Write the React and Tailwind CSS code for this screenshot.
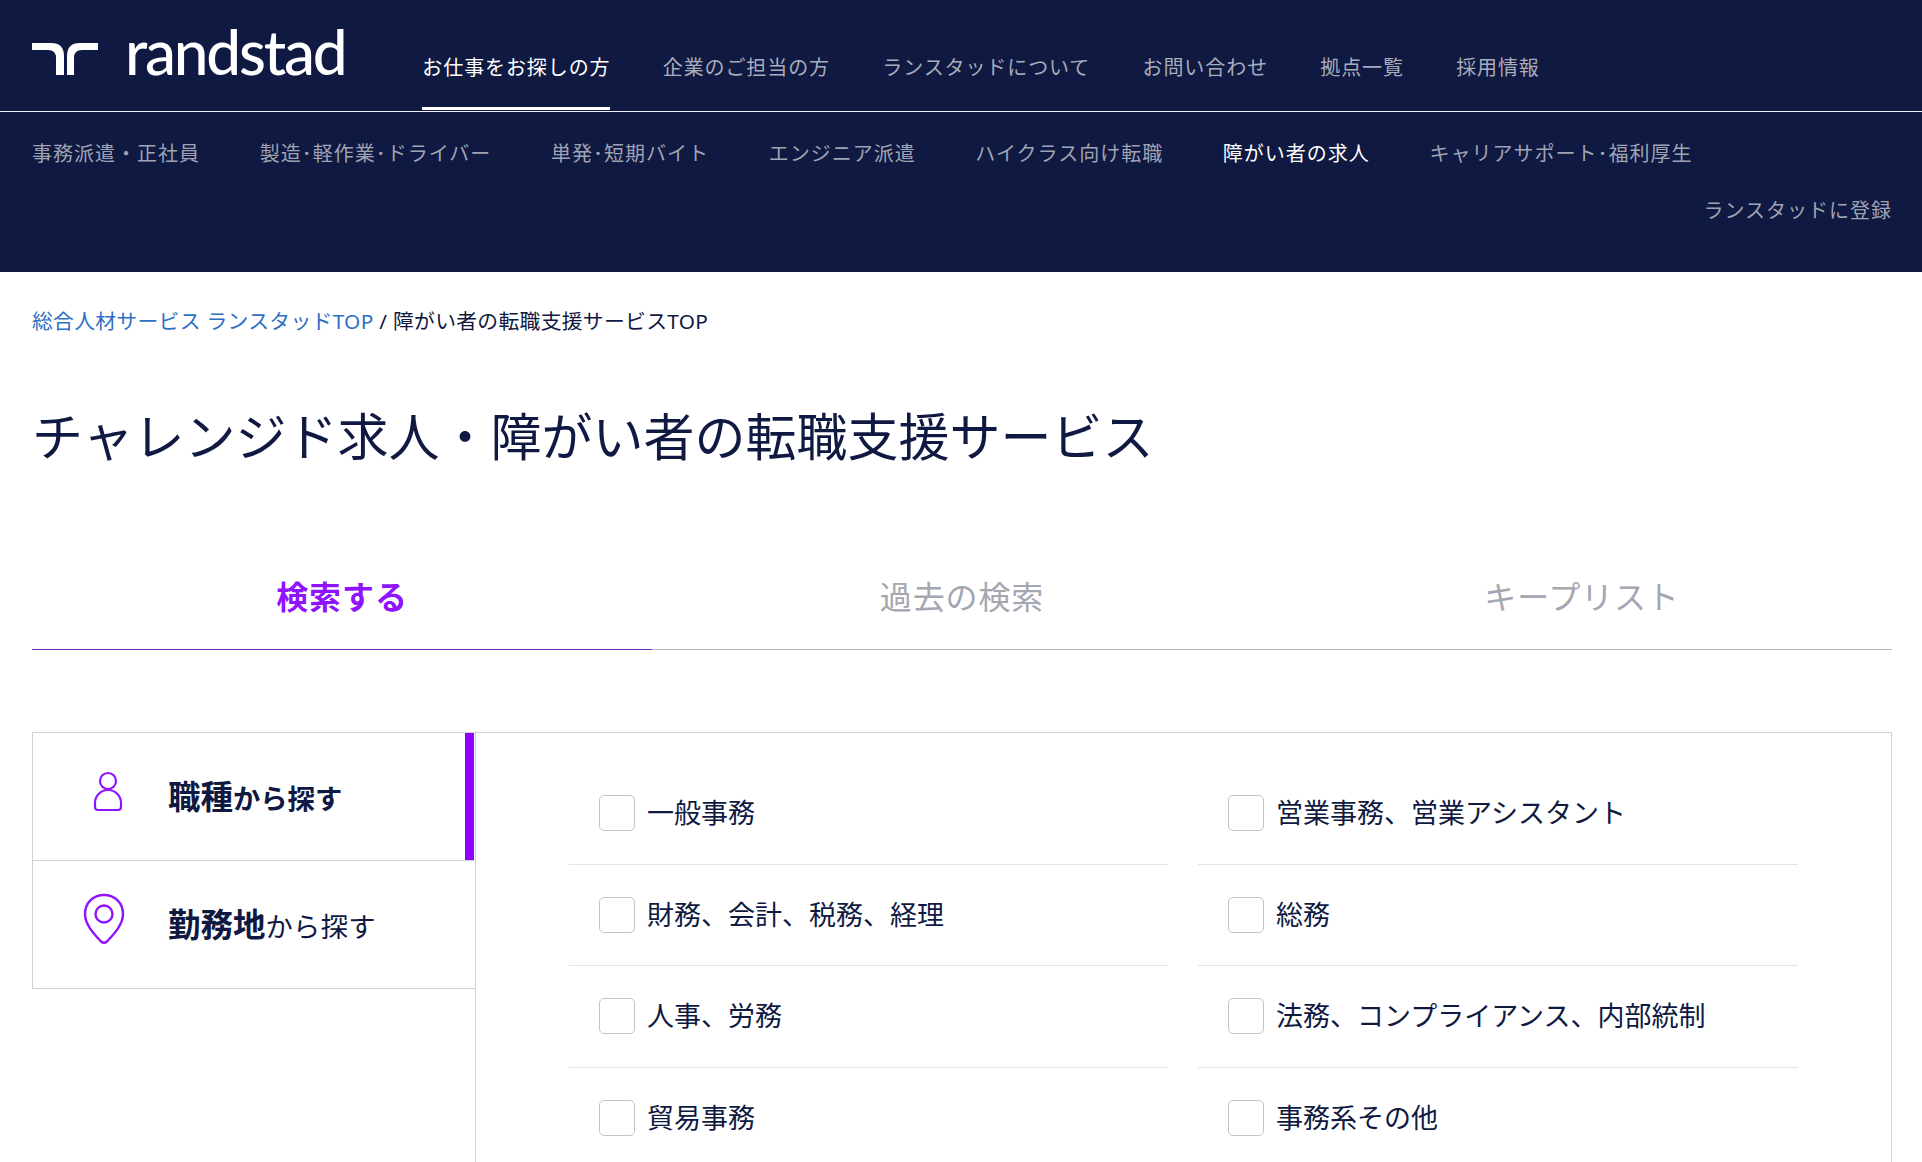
import React from "react";

const FONT = "font-['Noto_Sans','Noto_Sans_CJK_JP',sans-serif]";

const topNav = ["お仕事をお探しの方", "企業のご担当の方", "ランスタッドについて", "お問い合わせ", "拠点一覧", "採用情報"];
const subNav = ["事務派遣・正社員", "製造･軽作業･ドライバー", "単発･短期バイト", "エンジニア派遣", "ハイクラス向け転職", "障がい者の求人", "キャリアサポート･福利厚生"];
const rows = [
  ["一般事務", "営業事務、営業アシスタント"],
  ["財務、会計、税務、経理", "総務"],
  ["人事、労務", "法務、コンプライアンス、内部統制"],
  ["貿易事務", "事務系その他"],
];

function Logo() {
  return (
    <div className="flex items-start">
      <svg width="66" height="32" viewBox="0 0 66 32" className="mt-[43px] shrink-0" fill="#fff">
        <path d="M0 0H19Q32 0 32 13V32H24V15Q24 7 16 7H0Z" />
        <path d="M66 0H48Q35 0 35 13V32H42V15Q42 7 50 7H66Z" />
      </svg>
      <span className="ml-[27px] mt-[11px] text-[62px] leading-[80px] text-white font-['Lato',sans-serif] font-medium tracking-[-2.2px]">randstad</span>
    </div>
  );
}

function Item({ icon, children }) {
  return <div className="flex h-[127px] items-center">{icon}{children}</div>;
}

function Check({ label, last }) {
  return (
    <div className={`flex h-[101.5px] items-center pl-[30px] ${last ? "" : "border-b border-[#e4e5ea]"}`}>
      <span className="h-[36px] w-[36px] shrink-0 rounded-[5px] border border-[#c3c4cb] bg-white" />
      <span className="ml-[12px] text-[27px] text-[#0f1941]">{label}</span>
    </div>
  );
}

export default function App() {
  return (
    <div className={`h-[1162px] overflow-hidden bg-white ${FONT}`}>
      <header className="h-[272px] bg-[#0f1941]">
        <div className="flex h-[112px] items-start border-b border-[#eef0f5] pl-[32px]">
          <Logo />
          <nav className="ml-[77px] flex gap-[52.3px]">
            {topNav.map((t, i) => (
              <a key={t} className={`flex h-[110px] items-center border-b-[3px] pt-[29px] text-[20px] tracking-[0.9px] ${i === 0 ? "border-white text-white" : "border-transparent text-[#a9acbb]"}`}>{t}</a>
            ))}
          </nav>
        </div>
        <nav className="flex gap-[59.7px] pl-[32px] pt-[26px] text-[20px] leading-[32px] tracking-[1px]">
          {subNav.map((t) => (
            <a key={t} className={t === "障がい者の求人" ? "text-white" : "text-[#9fa3b3]"}>{t}</a>
          ))}
        </nav>
        <div className="pr-[30px] pt-[25px] text-right text-[20px] leading-[32px] tracking-[1px] text-[#9fa3b3]">ランスタッドに登録</div>
      </header>

      <main className="px-[32px]">
        <div className="pt-[35px] text-[20.8px] leading-[28px] tracking-[0.3px] text-[#0f1941]">
          <a className="text-[#2f6fc4]">総合人材サービス ランスタッドTOP</a> / 障がい者の転職支援サービスTOP
        </div>

        <h1 className="mt-[65px] text-[51px] leading-[72px] tracking-[0px] text-[#0f1941]">チャレンジド求人・障がい者の転職支援サービス</h1>

        <div className="mt-[103px] flex w-[1860px] border-b border-[#b7b9c2]">
          <div className="-mb-px flex h-[75px] w-[620px] items-start justify-center border-b border-[#7a2bb8] text-[32px] font-bold leading-[44px] tracking-[0.9px] text-[#9013fe]">検索する</div>
          <div className="flex h-[74px] w-[620px] items-start justify-center text-[32px] leading-[44px] tracking-[0.9px] text-[#a4a6b1]">過去の検索</div>
          <div className="flex h-[74px] w-[620px] items-start justify-center text-[32px] leading-[44px] tracking-[0.9px] text-[#a4a6b1]">キープリスト</div>
        </div>

        <div className="mt-[82px] flex w-[1860px] items-start">
          <div className="w-[443px] shrink-0 border border-r-0 border-[#d0d1d8] text-[#0f1941]">
            <div className="relative border-b border-[#d0d1d8]">
              <Item
                icon={
                  <svg width="30" height="42" viewBox="0 0 30 42" className="mb-[9px] ml-[60px] shrink-0" fill="none" stroke="#9013fe" strokeWidth="2.2">
                    <circle cx="15" cy="10" r="8" />
                    <path d="M2 32a13 13 0 0 1 26 0v4a3 3 0 0 1-3 3H5a3 3 0 0 1-3-3Z" />
                  </svg>
                }
              >
                <span className="ml-[45px] pt-[2px] text-[32.5px] font-bold leading-none">職種<span className="text-[27.3px]">から探す</span></span>
              </Item>
              <span className="absolute bottom-0 right-px top-0 w-[9px] bg-[#9000ff]" />
            </div>
            <Item
              icon={
                <svg width="42" height="52" viewBox="0 0 42 52" className="mb-[12px] ml-[50px] shrink-0" fill="none" stroke="#9013fe" strokeWidth="2.4">
                  <path d="M21 2C10 2 2 10 2 21c0 10 8 19 16 27.500q3 2.500 6 0C32 40 40 31 40 21 40 10 32 2 21 2Z" />
                  <circle cx="21" cy="21" r="8.500" />
                </svg>
              }
            >
              <span className="ml-[43px] pt-[2px] text-[32.5px] font-bold leading-none">勤務地<span className="text-[27.3px] font-normal tracking-[0.3px]">から探す</span></span>
            </Item>
          </div>
          <div className="h-[600px] flex-1 border border-[#d0d1d8] pl-[93px] pr-[92px] pt-[30px]">
            <div className="grid grid-cols-[599px_600px] gap-x-[30px]">
              {rows.flatMap((r, i) => r.map((label) => <Check key={label} label={label} last={i === 3} />))}
            </div>
          </div>
        </div>
      </main>
    </div>
  );
}
